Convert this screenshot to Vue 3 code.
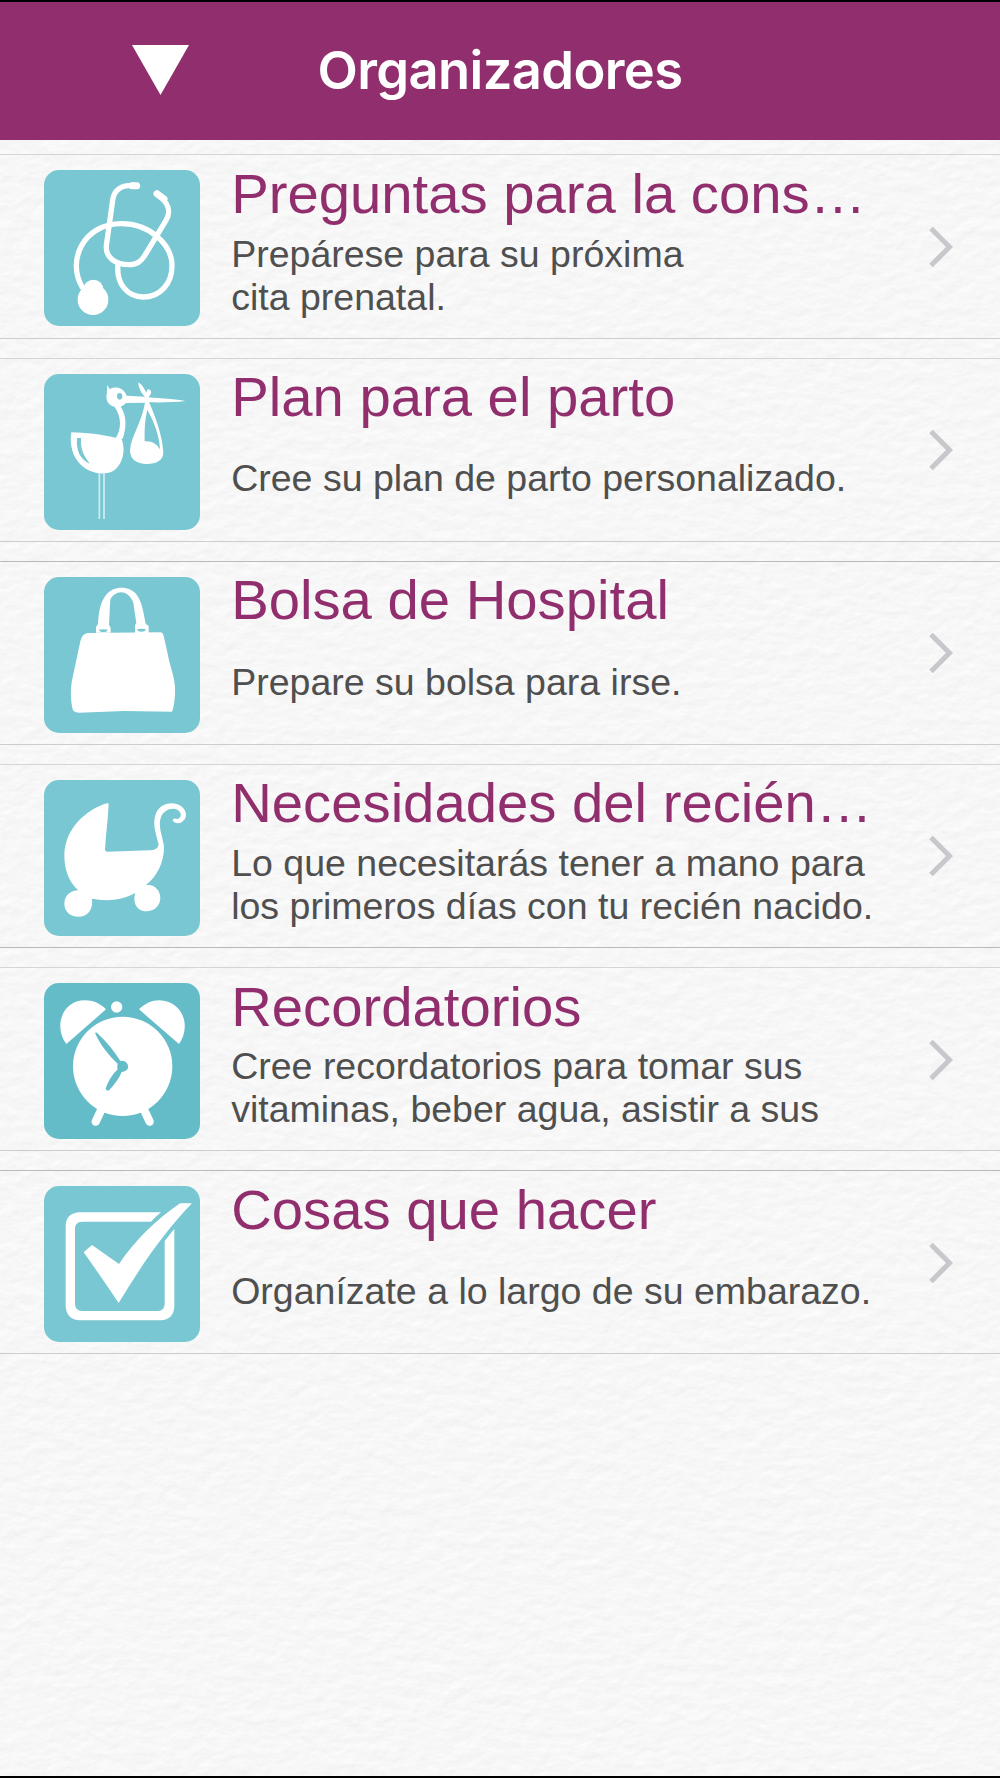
<template>
  <div class="screen">
    <svg class="paper" aria-hidden="true">
      <filter id="paper-grain" x="0" y="0" width="100%" height="100%" color-interpolation-filters="sRGB">
        <feTurbulence type="fractalNoise" baseFrequency="0.06 0.09" numOctaves="3" seed="8" />
        <feDiffuseLighting surfaceScale="0.17" diffuseConstant="1.118" lighting-color="#ffffff">
          <feDistantLight azimuth="250" elevation="60" />
        </feDiffuseLighting>
      </filter>
      <rect width="100%" height="100%" filter="url(#paper-grain)" />
    </svg>

    <header class="navbar">
      <button class="menu" type="button" aria-label="Menú">
        <svg viewBox="0 0 57 50"><path d="M0 0H57L28.5 50Z" fill="#fff" /></svg>
      </button>
      <h1>Organizadores</h1>
    </header>

    <main class="list">
      <article v-for="item in items" :key="item.icon" class="row" :class="item.edge">
        <svg v-if="item.icon === 'stethoscope'" class="icon" viewBox="42 45 468 468">
          <g fill="none" stroke="#fff" stroke-width="16" stroke-linecap="round" stroke-linejoin="round">
            <path d="M318 92C278 88 252 102 248 136L229 272C226 307 256 329 298 329C322 329 333 319 344 302L408 196C426 166 414 142 380 116" />
            <path d="M157 397C109 318 160 206 274 206C362 206 426 270 426 332C426 386 390 426 340 426C292 426 258 386 264 328" />
            <path d="M306 92H320M381 116L402 132" stroke-width="21" />
          </g>
          <circle cx="189" cy="434" r="46" fill="#fff" />
          <circle cx="190" cy="404" r="30" fill="#fff" />
        </svg>

        <svg v-else-if="item.icon === 'stork'" class="icon" viewBox="42 41 468 468">
          <path d="M124 216C165 217 215 222 256 232L274 234C284 258 282 286 272 306C256 337 232 342 205 339C150 331 114 280 124 216Z" fill="#fff" />
          <path d="M141 233H153C151 265 160 286 180 310C151 298 138 272 141 233Z" fill="#78c7d2" />
          <path d="M231 96V74L239 86C252 78 275 79 286 98L290 106L345 109C334 100 325 82 325 66C336 72 344 88 350 98C350 86 356 83 363 92C366 99 359 104 356 111C395 114 438 117 466 122C435 126 394 127 357 126C369 151 397 219 400 275C400 300 380 311 350 311C320 311 300 298 300 270C302 230 334 190 345 127L288 128C283 134 277 136 272 139C288 162 292 196 278 235H256C274 209 276 172 254 140C234 135 225 119 231 96Z" fill="#fff" />
          <path d="M352 148C344 180 343 211 344 243C366 241 381 252 390 267C388 222 370 181 352 148Z" fill="#78c7d2" />
          <ellipse cx="269" cy="108" rx="8" ry="10" fill="#78c7d2" />
          <path d="M208 337V476M222 337V476" fill="none" stroke="#d3edf1" stroke-width="5" />
        </svg>

        <svg v-else-if="item.icon === 'bag'" class="icon" viewBox="42 50 468 468">
          <path d="M172 218L392 216Q399 217 401 226L413 280C420 320 433 345 435 380C436 410 433 438 426 454L282 452L148 457Q130 458 127 444C122 418 121 390 125 365L151 243Q156 221 172 218Z" fill="#fff" />
          <path d="M198 217V200L204 191C206 152 212 124 228 104C248 76 299 74 320 103C337 126 341 160 347 190L356 197V218H315V194L319 189L310 127C293 84 254 90 241 118C239 143 239 170 237 193L242 202V217Z" fill="#fff" />
          <path d="M207 208Q219 205 233 208Q232 215 220 215Q208 215 207 208ZM321 207Q334 203 348 207Q346 214 334 214Q323 214 321 207Z" fill="#78c7d2" />
        </svg>

        <svg v-else-if="item.icon === 'pram'" class="icon" viewBox="42 43 468 468">
          <path d="M236 116C234 165 227 210 225 252Q226 258 232 258L360 254Q383 253 386 237C377 201 366 172 378 143C390 112 430 105 454 122C475 139 471 163 452 171C440 175 430 170 428 163Q432 156 440 160C454 159 456 143 446 135C430 122 401 132 393 154C383 181 397 209 402 242C403 291 380 334 347 359C372 354 391 374 391 397C391 420 373 437 349 437C323 437 306 413 316 382C275 404 230 408 186 399C190 430 174 453 145 453C121 453 103 437 103 414C103 390 121 375 145 374C115 347 103 309 103 270C104 188 169 132 230 113Q237 112 236 116Z" fill="#fff" />
        </svg>

        <svg v-else-if="item.icon === 'clock'" class="icon clock" viewBox="42 37 468 468">
          <path d="M109 220C70 168 96 89 165 89C190 89 211 99 228 116ZM447 220L327 116C344 99 366 89 388 89C454 90 487 162 447 220Z" fill="#fff" />
          <circle cx="260" cy="109" r="17" fill="#fff" />
          <circle cx="278" cy="287" r="149" fill="#fff" />
          <path d="M216 413L197 453M340 413L359 453" stroke="#fff" stroke-width="25" stroke-linecap="round" />
          <path d="M195 187Q198 183 204 189Q246 229 271 271Q279 269 286 273Q296 280 294 292Q290 303 275 304C269 321 255 340 238 358Q230 363 227 354C234 331 246 313 263 296Q260 288 263 279C239 257 210 222 195 187Z" fill="#64bcc9" />
        </svg>

        <svg v-else class="icon" viewBox="42 48 468 468">
          <path d="M393 127H150Q107 129 107 169V408Q109 449 150 451H391Q432 449 433 408V176L404 213V403Q403 422 384 423H156Q136 422 135 403V175Q136 156 156 155H363Q376 141 393 127Z" fill="#fff" />
          <path d="M161 247L186 225L267 282C318 207 380 148 450 100H486C410 177 337 281 266 399C231 347 196 296 161 247Z" fill="#fff" />
        </svg>

        <div class="text">
          <h2>{{ item.title }}</h2>
          <p>
            <span v-for="line in item.lines" :key="line">{{ line }}</span>
          </p>
        </div>

        <svg class="chevron" viewBox="0 0 24 42">
          <path d="M2 2.5L20.500 21L2 39.500" fill="none" stroke="#c7c7cc" stroke-width="5" />
        </svg>
      </article>
    </main>
  </div>
</template>

<script setup>
const items = [
  {
    icon: 'stethoscope',
    title: 'Preguntas para la cons…',
    lines: ['Prepárese para su próxima', 'cita prenatal.'],
  },
  { icon: 'stork', title: 'Plan para el parto', lines: ['Cree su plan de parto personalizado.'] },
  { icon: 'bag', title: 'Bolsa de Hospital', lines: ['Prepare su bolsa para irse.'], edge: 'strong-top' },
  {
    icon: 'pram',
    title: 'Necesidades del recién…',
    lines: ['Lo que necesitarás tener a mano para', 'los primeros días con tu recién nacido.'],
    edge: 'strong-bottom',
  },
  {
    icon: 'clock',
    title: 'Recordatorios',
    lines: ['Cree recordatorios para tomar sus', 'vitaminas, beber agua, asistir a sus'],
  },
  { icon: 'check', title: 'Cosas que hacer', lines: ['Organízate a lo largo de su embarazo.'], edge: 'strong-top' },
]
</script>

<style>
body {
  margin: 0;
  background: #f8f8f8;
}
</style>

<style scoped>
.screen {
  position: relative;
  box-sizing: border-box;
  width: 1000px;
  height: 1778px;
  border-top: 2px solid #000;
  border-bottom: 2px solid #000;
  overflow: hidden;
  font-family: 'Liberation Sans', Arial, sans-serif;
}

.paper {
  position: absolute;
  inset: 0;
  width: 100%;
  height: 100%;
}

.navbar {
  position: relative;
  display: grid;
  grid-template-columns: 1fr auto 1fr;
  align-items: center;
  height: 137.6px;
  background: #912f6e;
}

.navbar h1 {
  grid-column: 2;
  margin: 0 0 2px;
  color: #fff;
  font-family: Inter, 'Liberation Sans', sans-serif;
  font-size: 52.5px;
  font-weight: 600;
  letter-spacing: -0.012em;
  line-height: 60px;
}

.menu {
  justify-self: start;
  width: 57px;
  height: 50px;
  margin-left: 132px;
  margin-bottom: 2px;
  padding: 0;
  border: none;
  background: none;
}

.menu svg {
  display: block;
  width: 57px;
  height: 50px;
}

.list {
  position: relative;
  display: flex;
  flex-direction: column;
  gap: 19px;
  padding-top: 14.8px;
}

.row {
  display: flex;
  align-items: flex-start;
  box-sizing: border-box;
  height: 184.15px;
  padding-left: 43.7px;
  border-top: 1px solid #d5d5d8;
  border-bottom: 1px solid #cdcdd0;
}

.strong-top {
  border-top-color: #b9b9bd;
}

.strong-bottom {
  border-bottom-color: #b9b9bd;
}

.icon {
  flex: none;
  width: 156px;
  height: 156px;
  margin-top: 15px;
  border-radius: 15px;
  background: #78c7d2;
}

.icon.clock {
  background: #64bcc9;
}

.text {
  flex: 1;
  margin-left: 31.5px;
  padding-top: 6.6px;
}

.text h2 {
  margin: 0;
  color: #912f6e;
  font-size: 56.25px;
  font-weight: 400;
  line-height: 64px;
  white-space: nowrap;
}

.text p {
  display: flex;
  flex-direction: column;
  justify-content: center;
  height: 86px;
  margin: 6.8px 0 0;
  color: #4f4f4f;
  font-size: 37.5px;
  line-height: 43px;
  white-space: nowrap;
}

.chevron {
  flex: none;
  width: 24px;
  height: 42px;
  margin-top: 70.6px;
  margin-right: 47.5px;
}
</style>
